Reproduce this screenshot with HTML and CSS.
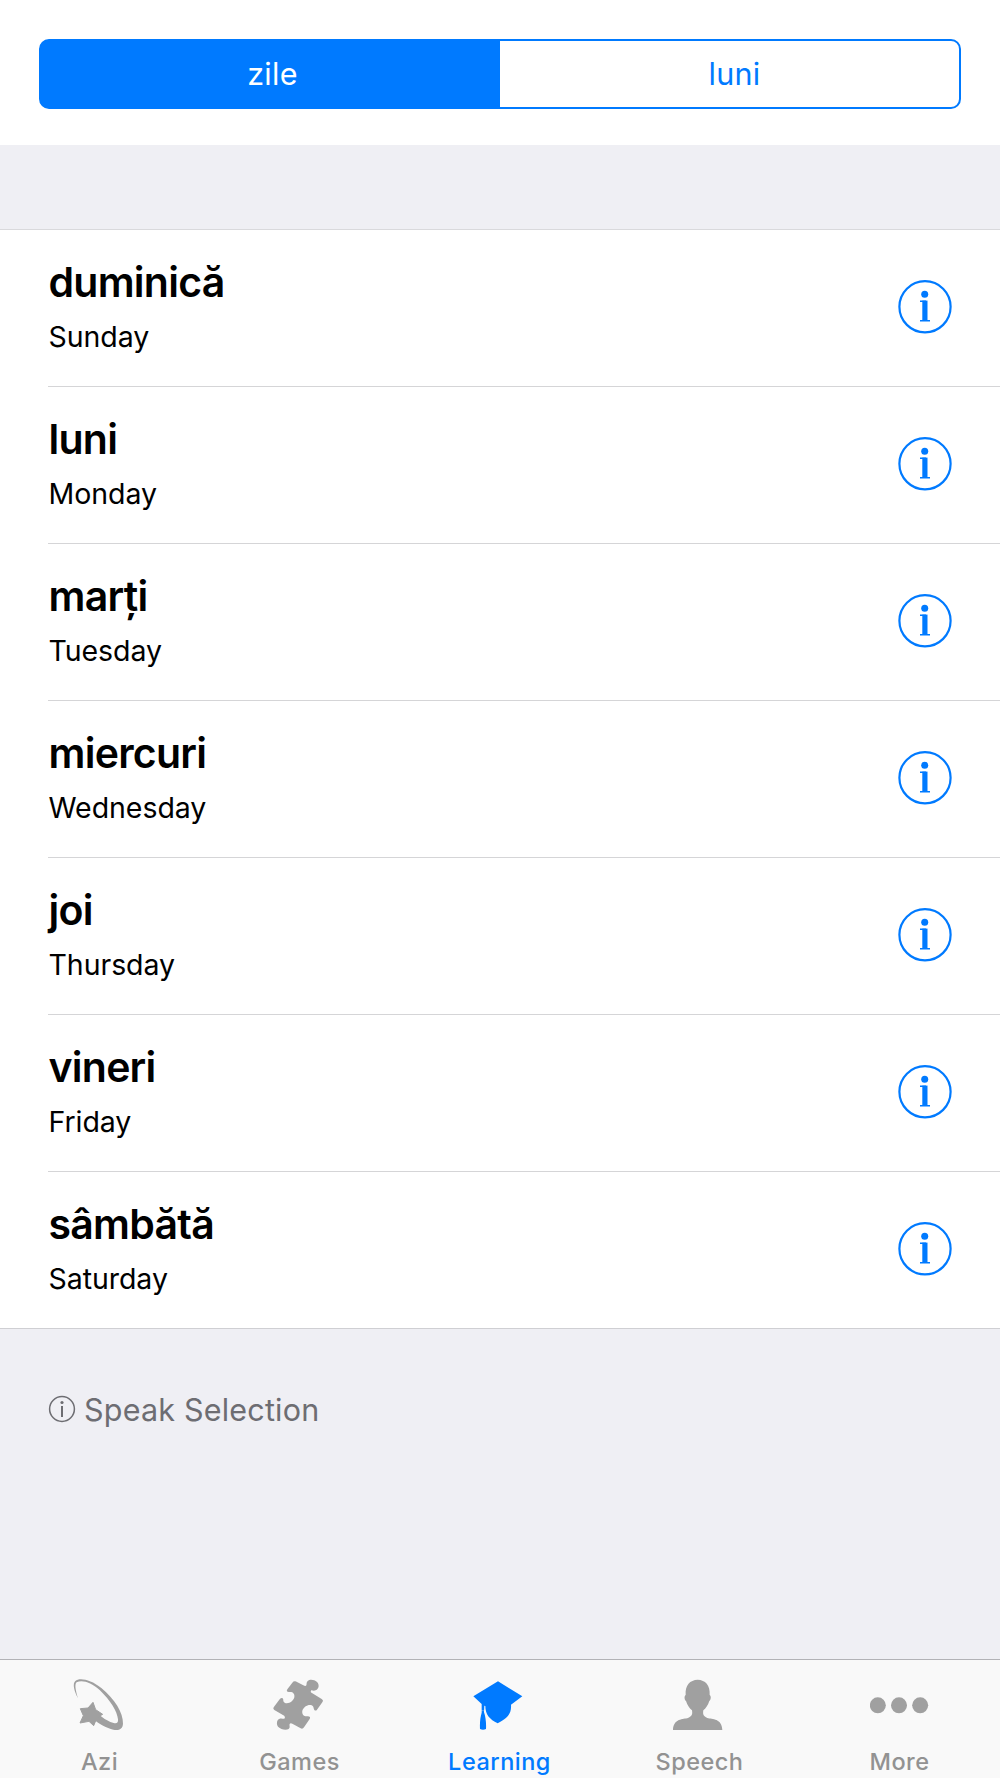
FILE: index.html
```html
<!DOCTYPE html>
<html lang="ro">
<head>
<meta charset="utf-8">
<title>Zile</title>
<link rel="stylesheet" href="styles.css">
</head>
<body>
<svg class="defs" width="0" height="0" aria-hidden="true">
  <symbol id="info" viewBox="0 0 54 54">
    <circle cx="27" cy="26.8" r="25.6" fill="none" stroke="currentColor" stroke-width="2.2"/>
    <circle cx="26.7" cy="14.3" r="3.5" fill="currentColor"/>
    <path d="M26.9 20.6V41" fill="none" stroke="currentColor" stroke-width="5.2"/>
    <path d="M22 21.2h6M22 40.7h10" fill="none" stroke="currentColor" stroke-width="1.4"/>
  </symbol>
</svg>
<div class="screen">
  <header class="top">
    <div class="segmented">
      <div class="segment selected">zile</div>
      <div class="segment">luni</div>
    </div>
  </header>
  <main class="content">
    <ul class="list">
      <li class="row"><div class="labels"><span class="word">duminică</span><span class="meaning">Sunday</span></div><svg class="info"><use href="#info"/></svg></li>
      <li class="row"><div class="labels"><span class="word">luni</span><span class="meaning">Monday</span></div><svg class="info"><use href="#info"/></svg></li>
      <li class="row"><div class="labels"><span class="word">marți</span><span class="meaning">Tuesday</span></div><svg class="info"><use href="#info"/></svg></li>
      <li class="row"><div class="labels"><span class="word">miercuri</span><span class="meaning">Wednesday</span></div><svg class="info"><use href="#info"/></svg></li>
      <li class="row"><div class="labels"><span class="word">joi</span><span class="meaning">Thursday</span></div><svg class="info"><use href="#info"/></svg></li>
      <li class="row"><div class="labels"><span class="word">vineri</span><span class="meaning">Friday</span></div><svg class="info"><use href="#info"/></svg></li>
      <li class="row"><div class="labels"><span class="word">sâmbătă</span><span class="meaning">Saturday</span></div><svg class="info"><use href="#info"/></svg></li>
    </ul>
    <div class="note">
      <svg class="note-icon" viewBox="0 0 28 28" fill="none" stroke="currentColor">
        <circle cx="14" cy="14" r="12.4" stroke-width="1.5"/>
        <circle cx="14" cy="7.5" r="1.6" fill="currentColor" stroke="none"/>
        <path d="M14 11v11" stroke-width="2"/>
      </svg>
      <span>Speak Selection</span>
    </div>
  </main>
  <nav class="tabs">
    <div class="tab">
      <svg class="tab-icon" viewBox="30 75 180 180" fill="currentColor">
        <path d="M54 145C42 122 37 101 46 93C58 82 92 88 124 114C164 147 190 188 189 221C188 238 176 242 160 239C140 235 118 222 100 208L116 192C132 208 149 216 161 219C171 221 175 218 174 208C172 184 151 151 119 120C93 96 65 88 50 97C43 102 47 122 54 145Z"/>
        <path d="M99 157L107 179L128 193L111 203L101 227L87 214L60 219L70 197L61 176L84 174Z" stroke="currentColor" stroke-width="3" stroke-linejoin="round"/>
      </svg>
      <span>Azi</span>
    </div>
    <div class="tab">
      <svg class="tab-icon" viewBox="90 75 180 180" fill="currentColor">
        <path d="M164 94Q167 93 171 96L190 106Q197 110 199 106C201 102 198 98 203 93C210 87 223 89 231 96C239 104 237 117 227 121C219 124 215 119 213 122C211 125 213 128 217 130L245 147Q251 150 248 155L231 179Q227 184 223 180C220 176 222 169 215 166C205 162 191 170 187 182C185 193 192 200 201 199C208 198 213 201 209 207L192 232Q188 238 182 235L157 221Q151 218 149 222C147 226 152 232 146 237C137 242 122 238 115 231C108 222 110 209 119 206C128 204 131 209 134 205C136 202 134 198 130 196L103 180Q98 177 101 172L119 148Q124 142 128 145C132 148 127 155 135 159C147 163 160 153 163 142C165 131 158 125 149 126C142 127 138 124 142 118L157 98Q160 94 164 94Z"/>
      </svg>
      <span>Games</span>
    </div>
    <div class="tab active">
      <svg class="tab-icon" viewBox="120 75 180 180" fill="currentColor">
        <path d="M204 94L277 139L243 164C245 192 232 204 203 220C179 208 166 194 166 168L163 167L162 187C167 201 169 219 168 237Q159 242 150 237C149 219 151 201 155 188L155 162L130 139Z"/>
        <path d="M151 182h15" fill="none" stroke="#f9f9f9" stroke-width="1"/>
      </svg>
      <span>Learning</span>
    </div>
    <div class="tab">
      <svg class="tab-icon" viewBox="90 75 180 180" fill="currentColor">
        <path d="M173 89C196 90 211 105 209 135C214 138 213 149 208 153C204 166 197 175 190 181C188 193 190 199 202 204C217 208 246 205 247 240H99C100 205 130 208 144 204C156 199 158 193 156 181C149 175 142 166 138 153C133 149 132 138 137 135C135 105 150 90 173 89Z"/>
      </svg>
      <span>Speech</span>
    </div>
    <div class="tab">
      <svg class="tab-icon" viewBox="90 75 180 180" fill="currentColor">
        <circle cx="113.5" cy="166" r="24"/><circle cx="177" cy="166" r="24"/><circle cx="240.5" cy="166" r="24"/>
      </svg>
      <span>More</span>
    </div>
  </nav>
</div>
</body>
</html>
```
FILE: styles.css
```css
* { box-sizing: border-box; }
body {
  margin: 0;
  background: #efeff4;
  font-family: Inter, "Liberation Sans", sans-serif;
  color: #000;
}
.defs { display: block; }
.screen {
  display: flex;
  flex-direction: column;
  width: 1000px;
  height: 1778px;
  overflow: hidden;
}
.top {
  height: 145px;
  padding: 38.6px 39px 0;
  background: #fff;
}
.segmented {
  display: flex;
  height: 70px;
  border: 2px solid #007aff;
  border-radius: 10px;
  background: linear-gradient(90deg, #007aff 50%, #fff 50%);
  overflow: hidden;
}
.segment {
  flex: 0 0 50%;
  padding-left: 10px;
  color: #007aff;
  font-size: 30.5px;
  line-height: 65px;
  letter-spacing: 0.3px;
  text-align: center;
}
.segment.selected { padding-left: 4px; background: #007aff; color: #fff; }
.content { flex: 1; padding-top: 84px; }
.list {
  margin: 0;
  padding: 0;
  list-style: none;
  background: #fff;
  border-top: 1px solid #d9d9dc;
  border-bottom: 1px solid #cfcfd3;
}
.row {
  display: flex;
  justify-content: space-between;
  height: 157px;
  margin-left: 48px;
  padding: 50px 48px 0 0;
  border-bottom: 1px solid #d5d5d7;
}
.row:last-child { height: 156px; border-bottom: 0; }
.labels { display: flex; flex-direction: column; margin-top: -23px; }
.word {
  padding-left: 0.5px;
  font-size: 41px;
  font-weight: 600;
  line-height: 50px;
  letter-spacing: -0.75px;
}
.meaning {
  margin-top: 10px;
  padding-left: 0.5px;
  font-size: 28.5px;
  line-height: 40px;
  letter-spacing: -0.05px;
}
.info { width: 54px; height: 54px; color: #007aff; }
.note {
  display: flex;
  align-items: center;
  gap: 8px;
  height: 40px;
  margin: 60px 0 0 48px;
  color: #6d6d72;
  font-size: 30.5px;
  letter-spacing: 0.2px;
}
.note-icon { width: 28px; height: 28px; }
.tabs {
  display: flex;
  height: 119px;
  border-top: 1px solid #b2b2b6;
  background: #f9f9f9;
}
.tab {
  display: flex;
  flex: 1;
  flex-direction: column;
  align-items: center;
  padding-top: 15px;
  color: #929292;
  font-size: 23.5px;
  font-weight: 450;
  line-height: 30px;
  letter-spacing: 0.5px;
}
.tab span { margin-left: -1px; }
.tab-icon { width: 60px; height: 60px; margin-bottom: 12px; color: #a0a0a0; }
.tab.active, .tab.active .tab-icon { color: #007aff; }
```
